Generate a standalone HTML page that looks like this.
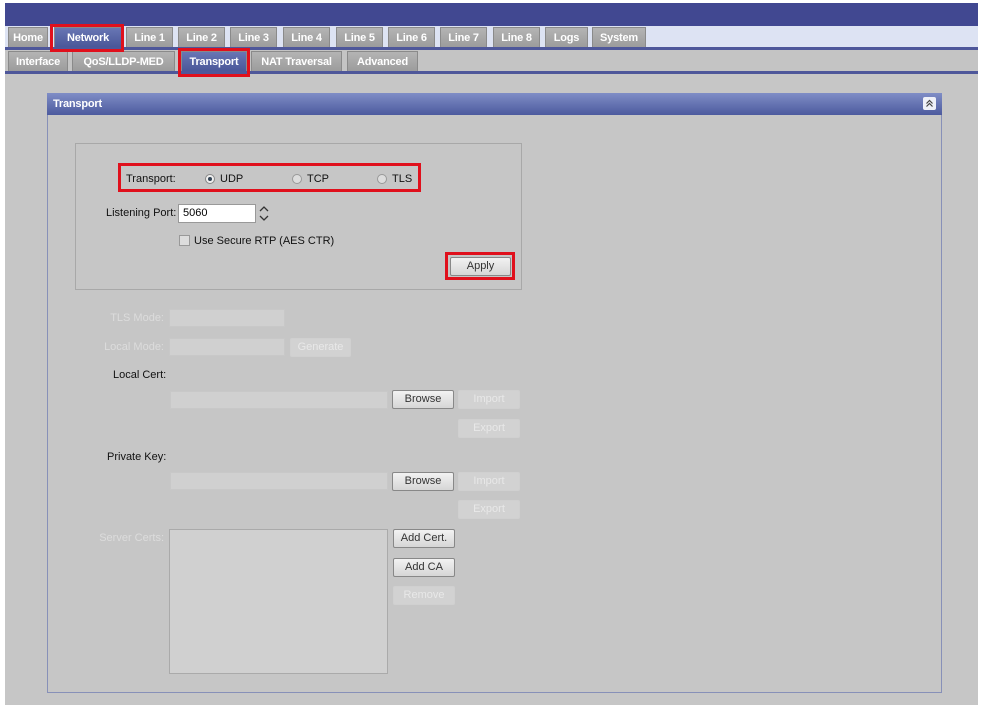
<!DOCTYPE html>
<html><head><style>
*{box-sizing:border-box;margin:0;padding:0}
body{width:985px;height:715px;background:#fff;position:relative;font-family:"Liberation Sans",sans-serif;font-size:11px;overflow:hidden}
.a{position:absolute}
.tab{position:absolute;height:20px;background:linear-gradient(#b4b4b4,#9c9c9c);color:#fff;font-weight:bold;font-size:11px;line-height:20px;text-align:center;border:1px solid #8a8a8a;border-bottom:none;letter-spacing:-0.2px}
.sel{background:linear-gradient(#6876b4,#4a5799);}
.red{position:absolute;border:3px solid #e0101c}
.btn{position:absolute;height:19px;border:1px solid #888;border-radius:2px;background:linear-gradient(#f2f2f2,#d6d6d6);text-align:center;line-height:17px;color:#333;font-size:11px}
.dis{border-color:#d0d0d0;background:#d2d2d2;color:#e8e8e8}
.lbl{position:absolute;color:#111;font-size:11px}
.dl{position:absolute;color:#dcdcdc;font-size:11px}
.r{text-align:right;width:120px}
.inp{position:absolute;background:#d0d0d0;border:1px solid #c8c8c8}
</style></head><body>
<div class="a" style="left:5px;top:3px;width:973px;height:23px;background:#414891"></div>
<div class="a" style="left:5px;top:26px;width:973px;height:21px;background:#dde3f3"></div>
<div class="a" style="left:5px;top:47px;width:973px;height:3px;background:#4e579a"></div>
<div class="a" style="left:5px;top:50px;width:973px;height:21px;background:#c4c4c4"></div>
<div class="a" style="left:5px;top:71px;width:973px;height:3px;background:#4e579a"></div>
<div class="a" style="left:5px;top:74px;width:973px;height:631px;background:#c6c6c6"></div>

<div class="tab" style="left:8px;top:27px;width:40px">Home</div>
<div class="tab sel" style="left:54px;top:27px;width:68px">Network</div>
<div class="tab" style="left:126px;top:27px;width:47px">Line 1</div>
<div class="tab" style="left:178px;top:27px;width:47px">Line 2</div>
<div class="tab" style="left:230px;top:27px;width:47px">Line 3</div>
<div class="tab" style="left:283px;top:27px;width:47px">Line 4</div>
<div class="tab" style="left:336px;top:27px;width:47px">Line 5</div>
<div class="tab" style="left:388px;top:27px;width:47px">Line 6</div>
<div class="tab" style="left:440px;top:27px;width:47px">Line 7</div>
<div class="tab" style="left:493px;top:27px;width:47px">Line 8</div>
<div class="tab" style="left:545px;top:27px;width:43px">Logs</div>
<div class="tab" style="left:592px;top:27px;width:54px">System</div>

<div class="tab" style="left:8px;top:51px;width:60px">Interface</div>
<div class="tab" style="left:72px;top:51px;width:103px">QoS/LLDP-MED</div>
<div class="tab sel" style="left:181px;top:51px;width:66px">Transport</div>
<div class="tab" style="left:251px;top:51px;width:91px">NAT Traversal</div>
<div class="tab" style="left:347px;top:51px;width:71px">Advanced</div>

<div class="red" style="left:50px;top:24px;width:74px;height:28px"></div>
<div class="red" style="left:178px;top:48px;width:72px;height:29px"></div>

<div class="a" style="left:47px;top:93px;width:895px;height:600px;border:1px solid #8790b8;background:#c6c6c6"></div>
<div class="a" style="left:47px;top:93px;width:895px;height:22px;background:linear-gradient(#7f8dc6,#4c5a9e);color:#fff;font-weight:bold;line-height:22px;padding-left:6px;letter-spacing:-0.2px">Transport</div>
<svg class="a" style="left:923px;top:97px" width="13" height="13"><rect width="13" height="13" rx="2" fill="#eef0f8"/><path d="M3.5 6.5l3-3 3 3M3.5 9.5l3-3 3 3" stroke="#444" fill="none" stroke-width="1.2"/></svg>

<div class="a" style="left:75px;top:143px;width:447px;height:147px;border:1px solid #a8a8a8"></div>
<div class="red" style="left:118px;top:163px;width:303px;height:29px"></div>
<div class="lbl" style="left:126px;top:173px">Transport:</div>
<div class="a" style="left:205px;top:174px;width:10px;height:10px;border-radius:50%;background:#eee;border:1px solid #888"><div style="margin:2px;width:4px;height:4px;border-radius:50%;background:#345"></div></div>
<div class="lbl" style="left:220px;top:173px">UDP</div>
<div class="a" style="left:292px;top:174px;width:10px;height:10px;border-radius:50%;background:#ddd;border:1px solid #999"></div>
<div class="lbl" style="left:307px;top:173px">TCP</div>
<div class="a" style="left:377px;top:174px;width:10px;height:10px;border-radius:50%;background:#ddd;border:1px solid #999"></div>
<div class="lbl" style="left:392px;top:173px">TLS</div>
<div class="lbl" style="left:106px;top:207px">Listening Port:</div>
<div class="a" style="left:178px;top:204px;width:78px;height:19px;background:#fff;border:1px solid #999;padding-left:4px;line-height:17px">5060</div>
<svg class="a" style="left:257px;top:204px" width="14" height="19"><path d="M3 7l4-4 4 4M3 12l4 4 4-4" stroke="#333" fill="none" stroke-width="1.3"/></svg>
<div class="a" style="left:179px;top:235px;width:11px;height:11px;background:#ddd;border:1px solid #999"></div>
<div class="lbl" style="left:194px;top:235px">Use Secure RTP (AES CTR)</div>
<div class="red" style="left:445px;top:252px;width:70px;height:28px"></div>
<div class="btn" style="left:450px;top:257px;width:61px">Apply</div>

<div class="dl r" style="left:44px;top:312px">TLS Mode:</div>
<div class="inp" style="left:169px;top:309px;width:116px;height:18px"></div>
<div class="dl r" style="left:44px;top:341px">Local Mode:</div>
<div class="inp" style="left:169px;top:338px;width:116px;height:18px"></div>
<div class="btn dis" style="left:290px;top:338px;width:61px">Generate</div>
<div class="lbl" style="left:113px;top:369px">Local Cert:</div>
<div class="inp" style="left:170px;top:391px;width:218px;height:18px"></div>
<div class="btn" style="left:392px;top:390px;width:62px">Browse</div>
<div class="btn dis" style="left:458px;top:390px;width:62px">Import</div>
<div class="btn dis" style="left:458px;top:419px;width:62px">Export</div>
<div class="lbl" style="left:107px;top:451px">Private Key:</div>
<div class="inp" style="left:170px;top:472px;width:218px;height:18px"></div>
<div class="btn" style="left:392px;top:472px;width:62px">Browse</div>
<div class="btn dis" style="left:458px;top:472px;width:62px">Import</div>
<div class="btn dis" style="left:458px;top:500px;width:62px">Export</div>
<div class="dl r" style="left:44px;top:532px">Server Certs:</div>
<div class="inp" style="left:169px;top:529px;width:219px;height:145px;border-color:#aaa"></div>
<div class="btn" style="left:393px;top:529px;width:62px">Add Cert.</div>
<div class="btn" style="left:393px;top:558px;width:62px">Add CA</div>
<div class="btn dis" style="left:393px;top:586px;width:62px">Remove</div>
</body></html>
